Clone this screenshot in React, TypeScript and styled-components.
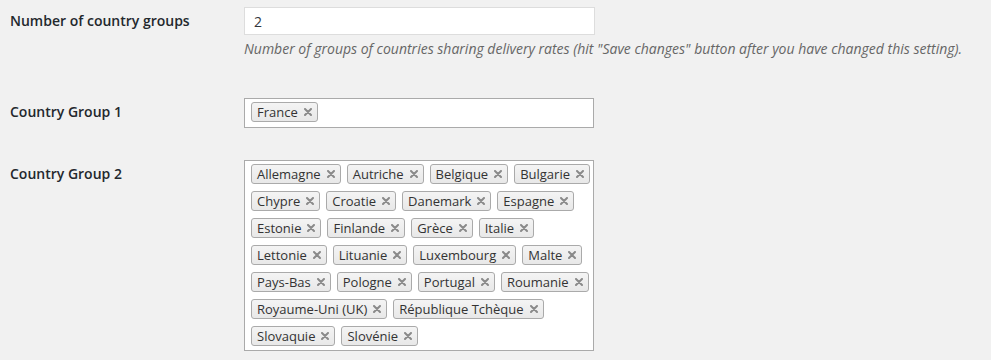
import styled, { createGlobalStyle } from "styled-components";

const GlobalStyle = createGlobalStyle`
  html, body {
    margin: 0;
    padding: 0;
    background: #f1f1f1;
  }
  body {
    font-family: "Open Sans", "Liberation Sans", sans-serif;
    color: #444;
    font-size: 14px;
  }
`;

const group1 = ["France"];
const group2 = [
  "Allemagne",
  "Autriche",
  "Belgique",
  "Bulgarie",
  "Chypre",
  "Croatie",
  "Danemark",
  "Espagne",
  "Estonie",
  "Finlande",
  "Grèce",
  "Italie",
  "Lettonie",
  "Lituanie",
  "Luxembourg",
  "Malte",
  "Pays-Bas",
  "Pologne",
  "Portugal",
  "Roumanie",
  "Royaume-Uni (UK)",
  "République Tchèque",
  "Slovaquie",
  "Slovénie",
];

function RemoveIcon() {
  return (
    <svg width="8" height="8" viewBox="0 0 8 8">
      <path
        d="M1 1 L7 7 M7 1 L1 7"
        stroke="#8a8a8a"
        strokeWidth="2"
        strokeLinecap="round"
      />
    </svg>
  );
}

function CountrySelect({ countries }: { countries: string[] }) {
  return (
    <ChoiceBox>
      {countries.map((c) => (
        <Choice key={c}>
          {c}
          <Remove>
            <RemoveIcon />
          </Remove>
        </Choice>
      ))}
    </ChoiceBox>
  );
}

export default function App() {
  return (
    <>
      <GlobalStyle />
      <Form>
        {/* number of groups */}
        <Row $top={7}>
          <Label>Number of country groups</Label>
          <Field>
            <NumberInput defaultValue="2" />
            <Description>
              Number of groups of countries sharing delivery rates (hit "Save
              changes" button after you have changed this setting).
            </Description>
          </Field>
        </Row>

        <Row $top={39}>
          <Label>Country Group 1</Label>
          <Field>
            <CountrySelect countries={group1} />
          </Field>
        </Row>

        <Row $top={32}>
          <Label>Country Group 2</Label>
          <Field>
            <CountrySelect countries={group2} />
          </Field>
        </Row>
      </Form>
    </>
  );
}

const Form = styled.div`
  padding: 0 0 0 10px;
`;

const Row = styled.div<{ $top: number }>`
  display: grid;
  grid-template-columns: 234px 1fr;
  margin-top: ${(p) => p.$top}px;
`;

const Label = styled.div`
  font-weight: 600;
  font-size: 14px;
  line-height: 28px;
  color: #23282d;
`;

const Field = styled.div`
  display: flex;
  flex-direction: column;
`;

const NumberInput = styled.input`
  box-sizing: border-box;
  width: 351px;
  height: 28px;
  margin: 0;
  padding: 0 9px;
  border: 1px solid #ddd;
  background: #fff;
  font-family: "Open Sans", "Liberation Sans", sans-serif;
  font-size: 14px;
  color: #32373c;
  outline: none;
`;

const Description = styled.p`
  margin: 4px 0 0;
  font-size: 14px;
  line-height: 20px;
  font-style: italic;
  color: #666;
  white-space: nowrap;
`;

const ChoiceBox = styled.div`
  box-sizing: border-box;
  width: 350px;
  min-height: 30px;
  padding: 3px 2px 4px 6px;
  display: flex;
  flex-wrap: wrap;
  gap: 7px 6px;
  border: 1px solid #aaa;
  background: #fff;
`;

const Choice = styled.span`
  display: inline-flex;
  align-items: center;
  gap: 6px;
  height: 20px;
  box-sizing: border-box;
  padding: 0 5px;
  border: 1px solid #aaa;
  border-radius: 3px;
  background: linear-gradient(#f4f4f4, #e8e8e8);
  font-size: 13px;
  line-height: 18px;
  color: #333;
  white-space: nowrap;
`;

const Remove = styled.span`
  display: inline-flex;
  align-items: center;
`;
